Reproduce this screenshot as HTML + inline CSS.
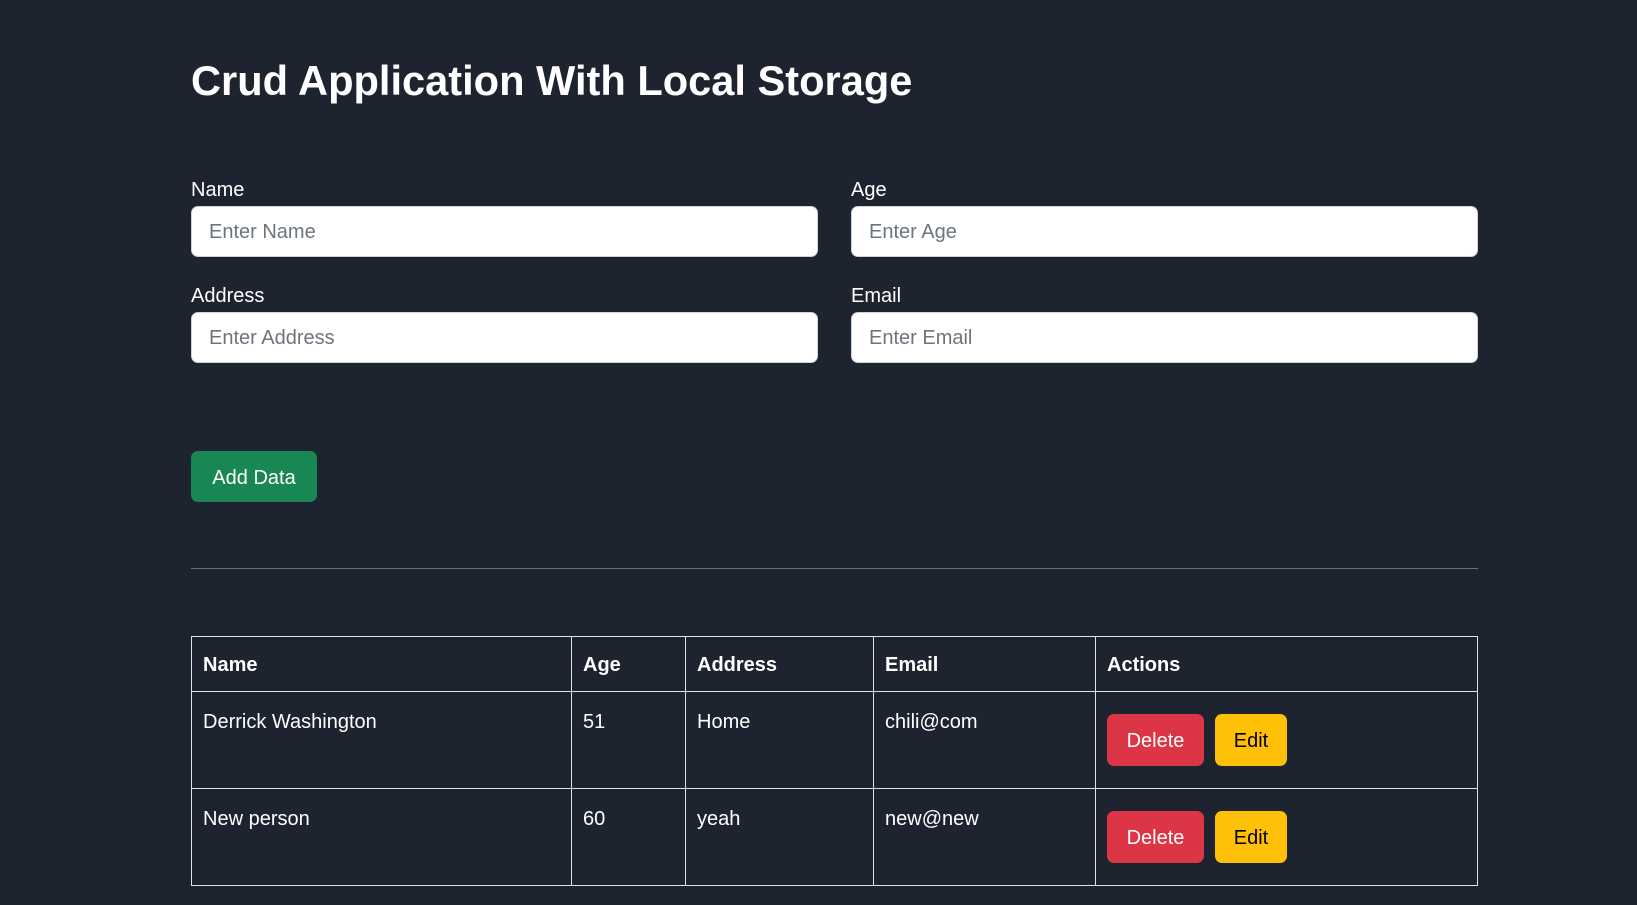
<!DOCTYPE html>
<html><head><style>
*{box-sizing:border-box;margin:0;padding:0}
body{width:1637px;height:905px;background:#1e2330;color:#fff;font-family:"Liberation Sans",sans-serif;position:relative;overflow:hidden}
.a{position:absolute}
h1{position:absolute;left:191px;top:57px;font-size:41.6px;font-weight:bold;white-space:nowrap}
.lbl{font-size:20px}
.in{background:#fff;border:1px solid #ced4da;border-radius:7px;height:51px;color:#6c757d;font-size:20px;padding:14px 17px 0}
.btn{border-radius:7px;font-size:20px;text-align:center}
table{position:absolute;left:191px;top:636px;width:1287px;border-collapse:collapse;font-size:20px}
td,th{border:1px solid #dee2e6;text-align:left;vertical-align:top;padding:17px 11px 0}
th{height:55px;font-weight:bold}
td{height:97px;padding-top:19px}
</style></head><body>
<h1>Crud Application With Local Storage</h1>
<div class="a lbl" style="left:191px;top:179px">Name</div>
<div class="a lbl" style="left:851px;top:179px">Age</div>
<div class="a in" style="left:191px;top:206px;width:627px">Enter Name</div>
<div class="a in" style="left:851px;top:206px;width:627px">Enter Age</div>
<div class="a lbl" style="left:191px;top:285px">Address</div>
<div class="a lbl" style="left:851px;top:285px">Email</div>
<div class="a in" style="left:191px;top:312px;width:627px">Enter Address</div>
<div class="a in" style="left:851px;top:312px;width:627px">Enter Email</div>
<div class="a btn" style="left:191px;top:451px;width:126px;height:51px;background:#198754;padding-top:16px">Add Data</div>
<div class="a" style="left:191px;top:568px;width:1287px;height:1px;background:#6b6f78"></div>
<table>
<tr><th style="width:380px">Name</th><th style="width:114px">Age</th><th style="width:188px">Address</th><th style="width:222px">Email</th><th>Actions</th></tr>
<tr><td>Derrick Washington</td><td>51</td><td>Home</td><td>chili@com</td><td style="padding-top:22px"><span style="display:inline-block;width:97px;height:52px;background:#dc3545;border-radius:7px;text-align:center;padding-top:16px">Delete</span><span style="display:inline-block;margin-left:11px;width:72px;height:52px;background:#ffc107;color:#000;border-radius:7px;text-align:center;padding-top:16px">Edit</span></td></tr>
<tr><td>New person</td><td>60</td><td>yeah</td><td>new@new</td><td style="padding-top:22px"><span style="display:inline-block;width:97px;height:52px;background:#dc3545;border-radius:7px;text-align:center;padding-top:16px">Delete</span><span style="display:inline-block;margin-left:11px;width:72px;height:52px;background:#ffc107;color:#000;border-radius:7px;text-align:center;padding-top:16px">Edit</span></td></tr>
</table>
</body></html>
